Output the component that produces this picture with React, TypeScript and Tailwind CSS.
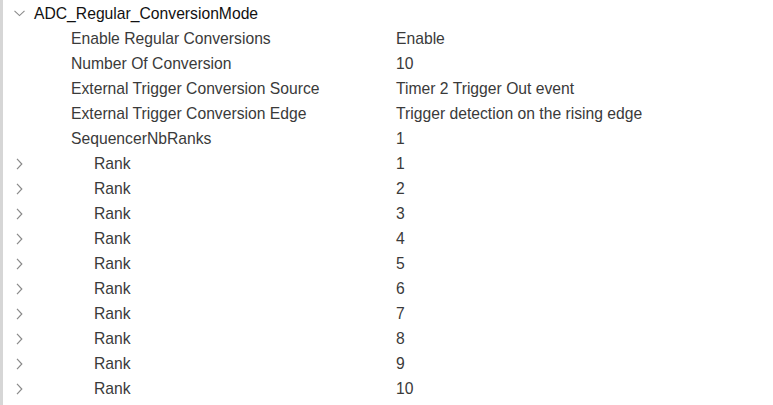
import { ReactNode } from "react";

type Row = { label: string; value: string; indent: 1 | 2; expandable?: boolean };

const rows: Row[] = [
  { label: "Enable Regular Conversions", value: "Enable", indent: 1 },
  { label: "Number Of Conversion", value: "10", indent: 1 },
  { label: "External Trigger Conversion Source", value: "Timer 2 Trigger Out event", indent: 1 },
  { label: "External Trigger Conversion Edge", value: "Trigger detection on the rising edge", indent: 1 },
  { label: "SequencerNbRanks", value: "1", indent: 1 },
  ...Array.from({ length: 10 }, (_, i) => ({
    label: "Rank",
    value: String(i + 1),
    indent: 2 as const,
    expandable: true,
  })),
];

function ChevronDown() {
  return (
    <svg width="11" height="7" viewBox="0 0 11 7" fill="none">
      <path d="M0.5 0.8 L5.5 5.6 L10.5 0.8" stroke="#8a8a8a" strokeWidth="1.1" />
    </svg>
  );
}

function ChevronRight() {
  return (
    <svg width="7" height="12" viewBox="0 0 7 12" fill="none">
      <path d="M1 0.8 L5.8 6 L1 11.2" stroke="#8a8a8a" strokeWidth="1.2" />
    </svg>
  );
}

function TreeRow({ icon, children }: { icon?: ReactNode; children: ReactNode }) {
  return (
    <div className="flex h-[25px] items-center">
      <div className="flex w-[31px] shrink-0 items-center justify-center pl-[2px]">{icon}</div>
      {children}
    </div>
  );
}

export default function App() {
  return (
    <div
      className="h-[405px] w-[773px] overflow-hidden border-l-[3px] border-[#d6d6d6] bg-white pt-[1px] text-[15.7px] text-[#3a3a3a]"
      style={{ fontFamily: '"Liberation Sans", Arial, sans-serif' }}
    >
      <TreeRow icon={<ChevronDown />}>
        <span className="text-[#111]">ADC_Regular_ConversionMode</span>
      </TreeRow>
      {rows.map((r, i) => (
        <TreeRow key={i} icon={r.expandable ? <ChevronRight /> : null}>
          <span className={r.indent === 2 ? "w-[362px] shrink-0 pl-[60px]" : "w-[362px] shrink-0 pl-[37px]"}>
            {r.label}
          </span>
          <span>{r.value}</span>
        </TreeRow>
      ))}
    </div>
  );
}
